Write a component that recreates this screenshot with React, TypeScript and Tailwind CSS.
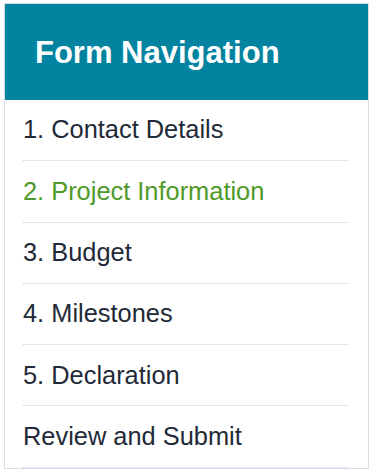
const steps = [
  { label: '1. Contact Details', active: false },
  { label: '2. Project Information', active: true },
  { label: '3. Budget', active: false },
  { label: '4. Milestones', active: false },
  { label: '5. Declaration', active: false },
  { label: 'Review and Submit', active: false },
];

export default function App() {
  return (
    <div className="min-h-screen bg-white pl-[4px] pt-[3px] font-['Liberation_Sans',Arial,sans-serif]">
      <nav className="w-[365px] border border-[#d5dde8] bg-white">
        {/* Header */}
        <div className="flex h-[96px] items-center bg-[#0283a0] pl-[30px]">
          <h2 className="text-[31px] font-bold leading-none text-white">Form Navigation</h2>
        </div>

        {/* Steps */}
        <ul className="pl-[18px] pr-[19px]">
          {steps.map((step) => (
            <li
              key={step.label}
              className="flex h-[61.3px] items-center border-b border-dotted border-[#c9d3e3]"
            >
              <span
                className={
                  'text-[25.4px] leading-none ' +
                  (step.active ? 'text-[#4f9a28]' : 'text-[#222a37]')
                }
              >
                {step.label}
              </span>
            </li>
          ))}
        </ul>
      </nav>
    </div>
  );
}
